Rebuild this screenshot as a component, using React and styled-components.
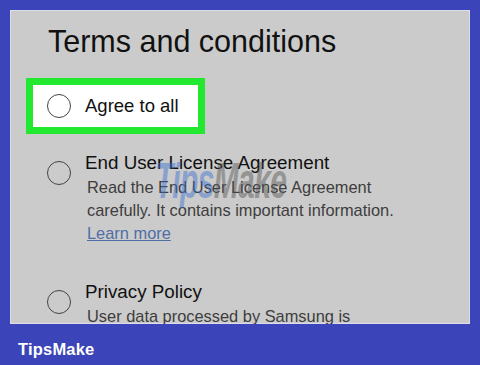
import React from 'react';
import styled, { createGlobalStyle } from 'styled-components';

const Global = createGlobalStyle`
  html, body { margin: 0; padding: 0; }
  body {
    width: 480px;
    height: 365px;
    overflow: hidden;
    background: #3b45b9;
    font-family: "Liberation Sans", Arial, sans-serif;
  }
`;

const Frame = styled.div`
  position: relative;
  width: 480px;
  height: 365px;
  padding: 10px 10px 0 10px;
  box-sizing: border-box;
  display: flex;
  flex-direction: column;
`;

const Panel = styled.div`
  height: 314px;
  background: #cbcbcb;
  box-shadow: inset 0 0 0 1px #dcdcee;
  overflow: hidden;
  padding: 16px 0 0 16px;
  box-sizing: border-box;
`;

const Title = styled.h1`
  margin: 0 0 0 22px;
  font-weight: normal;
  font-size: 30.5px;
  line-height: 31px;
  color: #111;
`;

const Highlight = styled.div`
  margin-top: 21px;
  width: 179px;
  height: 56px;
  box-sizing: border-box;
  border: 7px solid #22e82f;
  background: #fff;
  display: flex;
  align-items: center;
  padding-left: 14px;
`;

const Radio = styled.span`
  flex: none;
  width: 24px;
  height: 24px;
  border-radius: 50%;
  border: 1px solid #444;
  box-sizing: border-box;
  margin-top: ${p => p.$top || 0}px;
`;

const Label = styled.span`
  font-size: 18.5px;
  color: #111;
  margin-left: 14px;
`;

const Item = styled.div`
  display: flex;
  align-items: flex-start;
  margin-top: ${p => p.$gap}px;
  padding-left: 21px;
`;

const ItemBody = styled.div`
  margin-left: 14px;
  display: flex;
  flex-direction: column;
`;

const ItemTitle = styled.div`
  font-size: 18.8px;
  line-height: 22px;
  color: #111;
`;

const Desc = styled.div`
  margin-top: 2px;
  margin-left: 2px;
  font-size: 16.4px;
  line-height: 23px;
  color: #3d3d3d;
`;

const Link = styled.a`
  color: #4e6ea6;
  text-decoration: underline;
`;

const Brand = styled.div`
  padding: 16px 0 0 8px;
  font-weight: bold;
  font-size: 16.5px;
  color: #fff;
  letter-spacing: 0.2px;
`;

const Watermark = styled.div`
  position: absolute;
  left: 155px;
  top: 154px;
  font-family: "Liberation Sans", Arial, sans-serif;
  font-weight: bold;
  font-style: italic;
  font-size: 50px;
  line-height: 54px;
  letter-spacing: -1px;
  transform: scaleX(0.6);
  transform-origin: left top;
  opacity: 0.45;
  pointer-events: none;
  white-space: nowrap;
`;

const Mark = styled.span`
  color: ${p => p.$c};
`;

export default function App() {
  return (
    <Frame>
      <Global />
      <Panel>
        <Title>Terms and conditions</Title>
        <Highlight>
          <Radio />
          <Label>Agree to all</Label>
        </Highlight>
        <Item $gap={18}>
          <Radio $top={9} />
          <ItemBody>
            <ItemTitle>End User License Agreement</ItemTitle>
            <Desc>
              Read the End User License Agreement<br />
              carefully. It contains important information.<br />
              <Link>Learn more</Link>
            </Desc>
          </ItemBody>
        </Item>
        <Item $gap={36}>
          <Radio $top={9} />
          <ItemBody>
            <ItemTitle>Privacy Policy</ItemTitle>
            <Desc>User data processed by Samsung is</Desc>
          </ItemBody>
        </Item>
      </Panel>
      <Brand>TipsMake</Brand>
      <Watermark>
        <Mark $c="#3a6fd0">Tips</Mark>
        <Mark $c="#555">Make</Mark>
      </Watermark>
    </Frame>
  );
}
